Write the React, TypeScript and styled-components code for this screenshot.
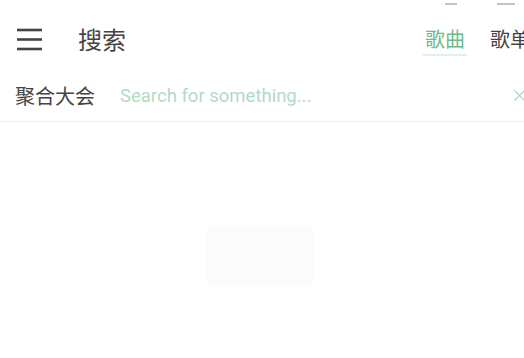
import React from 'react';
import styled, { createGlobalStyle } from 'styled-components';

const GlobalStyle = createGlobalStyle`
  html, body {
    margin: 0;
    padding: 0;
    background: #ffffff;
    overflow: hidden;
  }
  body {
    font-family: Roboto, "Noto Sans CJK SC", sans-serif;
  }
`;

const Page = styled.div`
  width: 524px;
  height: 358px;
  position: relative;
  overflow: hidden;
  background: #fff;
`;

const TopHint = styled.div`
  position: absolute;
  top: -6px;
  right: 0;
  display: flex;
  gap: 40px;
  padding-right: 9px;
`;

const HintMark = styled.span<{ $w: number }>`
  display: block;
  width: ${p => p.$w}px;
  height: 9px;
  border-bottom: 2px solid #888;
  opacity: 0.5;
`;

const Header = styled.header`
  height: 62px;
  display: flex;
  align-items: center;
  box-sizing: border-box;
`;

const MenuButton = styled.button`
  width: 60px;
  height: 40px;
  margin-top: 16px;
  border: 0;
  background: none;
  padding: 0 0 0 16px;
  display: flex;
  align-items: center;
  cursor: pointer;
`;

const Title = styled.h1`
  margin: 15px 0 0 18px;
  font-family: "Noto Sans CJK SC", sans-serif;
  font-weight: 400;
  font-size: 24px;
  color: #444;
  flex: 1;
`;

const Tabs = styled.nav`
  display: flex;
  flex-shrink: 0;
  gap: 25px;
  margin-top: 18px;
  margin-right: -6px;
`;

const Tab = styled.div<{ $active?: boolean }>`
  position: relative;
  font-family: "Noto Sans CJK SC", sans-serif;
  font-size: 20px;
  white-space: nowrap;
  color: ${p => (p.$active ? '#6dba8e' : '#444')};
  padding: 0 0 4px;
  &::after {
    content: '';
    position: absolute;
    left: -2px;
    right: -2px;
    bottom: 1px;
    height: 2px;
    background: ${p => (p.$active ? '#e2f1e8' : 'transparent')};
  }
`;

const SearchRow = styled.div`
  height: 60px;
  display: flex;
  align-items: center;
  border-bottom: 1px solid #f0f0f0;
  box-sizing: border-box;
  padding: 8px 0 0 15px;
`;

const Source = styled.span`
  font-family: "Noto Sans CJK SC", sans-serif;
  font-size: 20px;
  color: #444;
  margin-right: 25px;
  white-space: nowrap;
`;

const SearchInput = styled.input`
  flex: 1;
  border: 0;
  outline: none;
  background: transparent;
  font-family: Roboto, sans-serif;
  font-size: 18.5px;
  color: #444;
  padding: 0;
  &::placeholder {
    color: #b3dac4;
  }
`;

const ClearButton = styled.button`
  border: 0;
  background: none;
  padding: 0;
  width: 12px;
  height: 30px;
  display: flex;
  align-items: center;
  justify-content: flex-end;
  margin-right: -1px;
`;

const Body = styled.main`
  display: flex;
  justify-content: center;
  padding-top: 105px;
`;

const Ghost = styled.div`
  width: 106px;
  height: 60px;
  margin-left: -5px;
  background: #fbfbfb;
  border-radius: 2px;
`;

export default function App() {
  return (
    <Page>
      <GlobalStyle />
      <TopHint>
        <HintMark $w={12} />
        <HintMark $w={18} />
      </TopHint>
      <Header>
        <MenuButton aria-label="menu">
          <svg width="26" height="24" viewBox="0 0 26 24">
            <g stroke="#444" strokeWidth="2.6" strokeLinecap="butt">
              <line x1="1" y1="3" x2="26" y2="3" />
              <line x1="1" y1="12.5" x2="26" y2="12.5" />
              <line x1="1" y1="22" x2="26" y2="22" />
            </g>
          </svg>
        </MenuButton>
        <Title>搜索</Title>
        <Tabs>
          <Tab $active>歌曲</Tab>
          <Tab>歌单</Tab>
        </Tabs>
      </Header>
      <SearchRow>
        <Source>聚合大会</Source>
        <SearchInput placeholder="Search for something..." />
        <ClearButton aria-label="clear">
          <svg width="11" height="11" viewBox="0 0 11 11">
            <g stroke="#a8d4bb" strokeWidth="1.2">
              <line x1="0.5" y1="0.5" x2="10.5" y2="10.5" />
              <line x1="10.5" y1="0.5" x2="0.5" y2="10.5" />
            </g>
          </svg>
        </ClearButton>
      </SearchRow>
      <Body>
        <Ghost />
      </Body>
    </Page>
  );
}
